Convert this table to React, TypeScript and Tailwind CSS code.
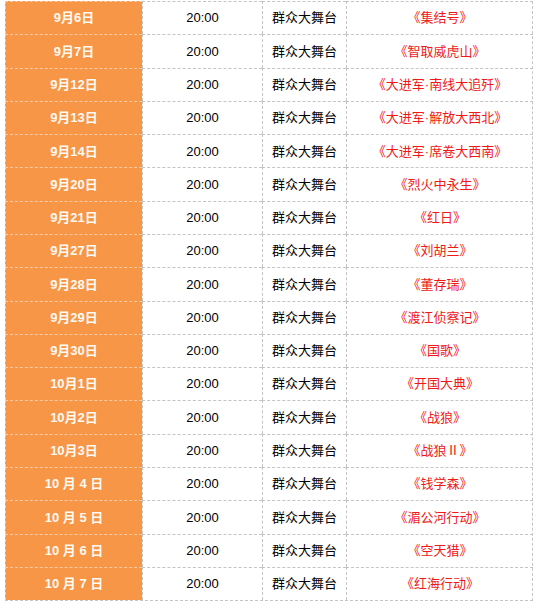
const rows: [string, string][] = [
  ['9月6日', '《集结号》'],
  ['9月7日', '《智取威虎山》'],
  ['9月12日', '《大进军·南线大追歼》'],
  ['9月13日', '《大进军·解放大西北》'],
  ['9月14日', '《大进军·席卷大西南》'],
  ['9月20日', '《烈火中永生》'],
  ['9月21日', '《红日》'],
  ['9月27日', '《刘胡兰》'],
  ['9月28日', '《董存瑞》'],
  ['9月29日', '《渡江侦察记》'],
  ['9月30日', '《国歌》'],
  ['10月1日', '《开国大典》'],
  ['10月2日', '《战狼》'],
  ['10月3日', '《战狼Ⅱ》'],
  ['10 月 4 日', '《钱学森》'],
  ['10 月 5 日', '《湄公河行动》'],
  ['10 月 6 日', '《空天猎》'],
  ['10 月 7 日', '《红海行动》'],
]

export default function App() {
  return (
    <div
      className="h-[608px] w-[538px] bg-white pl-[5px] pt-[1px]"
      style={{ fontFamily: '"Liberation Sans", "Noto Sans CJK SC", sans-serif' }}
    >
      <div className="flex h-[600px] w-[528px] flex-col border-b border-r border-dashed border-[#c4c4c4] text-[13px]">
        {rows.map(([date, title], i) => (
          <div key={i} className="grid flex-1 grid-cols-[137px_120px_84px_187px]">
            <div className="flex items-center justify-center border-l border-t border-dashed border-[#f8c9a2] bg-[#f79646] font-bold text-[#fffaf2]">
              {date}
            </div>
            <div className="flex items-center justify-center border-l border-t border-dashed border-[#c4c4c4] text-black">
              20:00
            </div>
            <div className="flex items-center justify-center border-l border-t border-dashed border-[#c4c4c4] text-black">
              群众大舞台
            </div>
            <div className="flex items-center justify-center border-l border-t border-dashed border-[#c4c4c4] text-[#f01818]">
              {title}
            </div>
          </div>
        ))}
      </div>
    </div>
  )
}
